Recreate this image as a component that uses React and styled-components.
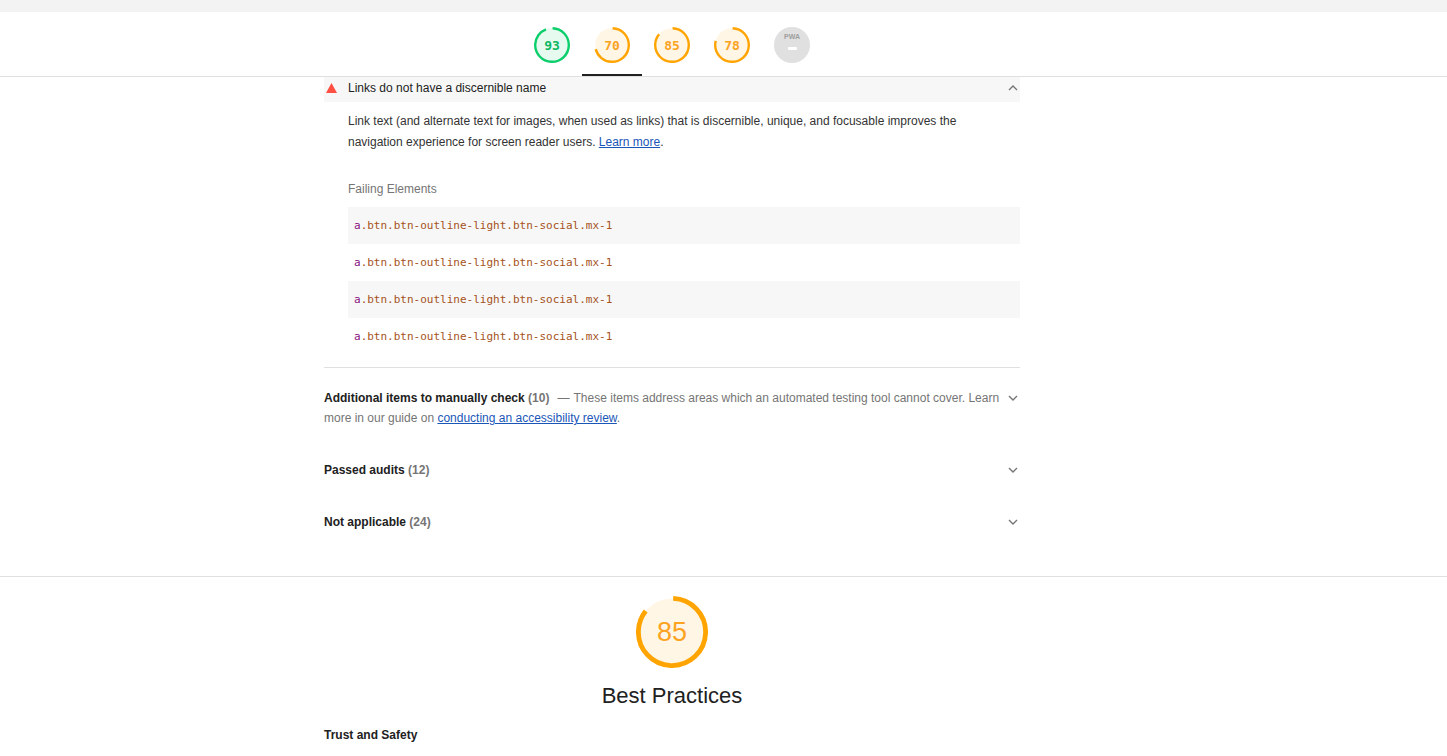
import React from "react";
import styled, { createGlobalStyle } from "styled-components";

const GlobalStyle = createGlobalStyle`
  html, body { margin: 0; padding: 0; background: #fff; }
  body { font-family: "Liberation Sans", Arial, sans-serif; color: #212121; }
  * { box-sizing: border-box; }
`;

const COLORS = {
  pass: { stroke: "#0cce6b", fill: "#e7faf0", text: "#0cb862" },
  average: { stroke: "#ffa400", fill: "#fff6e6", text: "#fca322" },
};

const TopStrip = styled.div`
  height: 12px;
  background: #f3f3f3;
`;

const StickyHeader = styled.header`
  height: 65px;
  border-bottom: 1px solid #e0e0e0;
  background: #fff;
`;

const Column = styled.div`
  width: 696px;
  margin-left: 324px;
`;

const GaugeRow = styled.div`
  display: flex;
  justify-content: center;
  height: 64px;
`;

const GaugeTab = styled.div`
  width: 60px;
  height: 64px;
  padding-top: 4px;
  display: flex;
  align-items: center;
  justify-content: center;
  border-bottom: 2px solid ${(p) => (p.$active ? "#212121" : "transparent")};
`;

const GaugeBox = styled.div`
  position: relative;
  width: ${(p) => p.$size}px;
  height: ${(p) => p.$size}px;
  display: flex;
  align-items: center;
  justify-content: center;
`;

const GaugeSvg = styled.svg`
  position: absolute;
  inset: 0;
  width: 100%;
  height: 100%;
`;

const GaugeLabel = styled.span`
  position: relative;
  font-family: ${(p) => (p.$mono ? '"DejaVu Sans Mono", monospace' : '"Liberation Sans", Arial, sans-serif')};
  font-weight: ${(p) => (p.$mono ? 700 : 400)};
  font-size: ${(p) => p.$fontSize}px;
  color: ${(p) => p.$color};
  line-height: 1;
`;

const PwaBadge = styled.div`
  width: 36px;
  height: 36px;
  border-radius: 50%;
  background: #e0e0e0;
  display: flex;
  flex-direction: column;
  align-items: center;
  padding-top: 6px;
`;

const PwaText = styled.span`
  font-family: "Liberation Sans", Arial, sans-serif;
  font-size: 7px;
  font-weight: 700;
  color: #9e9e9e;
  line-height: 8px;
`;

const PwaDash = styled.span`
  width: 9px;
  height: 3px;
  margin-top: 6px;
  background: #fff;
  border-radius: 1px;
`;

function Gauge({ score, size, kind, mono, fontSize }) {
  const c = COLORS[kind];
  const r = 56;
  const circ = 2 * Math.PI * r;
  return (
    <GaugeBox $size={size}>
      <GaugeSvg viewBox="0 0 120 120">
        <circle cx="60" cy="60" r={r} fill={c.fill} stroke="none" />
        <circle
          cx="60"
          cy="60"
          r={r}
          fill="none"
          stroke={c.stroke}
          strokeWidth="8"
          strokeDasharray={`${(score / 100) * circ} ${circ}`}
          transform="rotate(-88 60 60)"
        />
      </GaugeSvg>
      <GaugeLabel $mono={mono} $fontSize={fontSize} $color={c.text}>
        {score}
      </GaugeLabel>
    </GaugeBox>
  );
}

const AuditHeader = styled.div`
  display: flex;
  align-items: flex-start;
  height: 25px;
  padding-top: 1px;
  background: #f7f7f7;
  font-size: 12px;
  line-height: 20px;
`;

const IconSlot = styled.span`
  width: 24px;
  height: 20px;
  display: flex;
  align-items: center;
  padding-left: 2px;
`;

const AuditTitle = styled.span`
  flex: 1;
  color: #212121;
`;

const ChevronSlot = styled.span`
  width: 14px;
  display: flex;
  justify-content: center;
  align-items: center;
  flex-shrink: 0;
  height: 20px;
`;

const Description = styled.p`
  margin: 9px 0 0 24px;
  padding-right: 40px;
  font-size: 12px;
  line-height: 21px;
  color: #333;
`;

const Link = styled.a`
  color: #1a56b7;
  text-decoration: underline;
`;

const FailingLabel = styled.div`
  margin: 26px 0 0 24px;
  font-size: 12px;
  line-height: 20px;
  color: #757575;
`;

const ElementTable = styled.div`
  margin: 8px 0 0 24px;
`;

const ElementRow = styled.div`
  height: 37px;
  display: flex;
  align-items: center;
  padding-left: 6px;
  background: ${(p) => (p.$shaded ? "#f7f7f7" : "transparent")};
  font-family: "DejaVu Sans Mono", monospace;
  font-size: 11px;
`;

const Tag = styled.span`
  color: #881280;
`;

const Classes = styled.span`
  color: #a5521b;
`;

const Divider = styled.hr`
  margin: 12px 0 0 0;
  border: none;
  border-top: 1px solid #e0e0e0;
`;

const Groups = styled.div`
  padding-top: 4px;
`;

const Group = styled.div`
  display: flex;
  align-items: flex-start;
  gap: 2px;
  padding: 16px 0;
  font-size: 12px;
  line-height: 20px;
`;

const GroupText = styled.div`
  width: 680px;
  color: #757575;
`;

const GroupTitle = styled.span`
  font-weight: 700;
  color: #212121;
`;

const GroupCount = styled.span`
  font-weight: 700;
  color: #757575;
`;

const Dash = styled.span`
  margin: 0 1px 0 8px;
`;

const Section = styled.section`
  margin-top: 28px;
  border-top: 1px solid #e0e0e0;
  padding-top: 19px;
`;

const CategoryHead = styled.div`
  display: flex;
  flex-direction: column;
  align-items: center;
`;

const CategoryTitle = styled.h2`
  margin: 14px 0 0 0;
  font-size: 22px;
  line-height: 28px;
  font-weight: 400;
  color: #212121;
`;

const SubGroupTitle = styled.div`
  margin-top: 15px;
  font-size: 12px;
  line-height: 20px;
  font-weight: 700;
  color: #212121;
`;

const Chevron = ({ up }) => (
  <svg width="10" height="6" viewBox="0 0 10 6">
    <path
      d={up ? "M1 5 L5 1 L9 5" : "M1 1 L5 5 L9 1"}
      fill="none"
      stroke="#757575"
      strokeWidth="1.4"
    />
  </svg>
);

const FailIcon = () => (
  <svg width="11" height="10" viewBox="0 0 11 10">
    <polygon points="5.5,0 11,10 0,10" fill="#ff4e42" />
  </svg>
);

const selector = ".btn.btn-outline-light.btn-social.mx-1";

export default function App() {
  return (
    <>
      <GlobalStyle />
      <TopStrip />
      <StickyHeader>
        <Column>
          <GaugeRow>
            <GaugeTab>
              <Gauge score={93} size={36} kind="pass" mono fontSize={13} />
            </GaugeTab>
            <GaugeTab $active>
              <Gauge score={70} size={36} kind="average" mono fontSize={13} />
            </GaugeTab>
            <GaugeTab>
              <Gauge score={85} size={36} kind="average" mono fontSize={13} />
            </GaugeTab>
            <GaugeTab>
              <Gauge score={78} size={36} kind="average" mono fontSize={13} />
            </GaugeTab>
            <GaugeTab>
              <PwaBadge>
                <PwaText>PWA</PwaText>
                <PwaDash />
              </PwaBadge>
            </GaugeTab>
          </GaugeRow>
        </Column>
      </StickyHeader>

      <Column>
        <AuditHeader>
          <IconSlot>
            <FailIcon />
          </IconSlot>
          <AuditTitle>Links do not have a discernible name</AuditTitle>
          <ChevronSlot>
            <Chevron up />
          </ChevronSlot>
        </AuditHeader>
        <Description>
          Link text (and alternate text for images, when used as links) that is discernible, unique, and
          focusable improves the navigation experience for screen reader users. <Link href="#">Learn more</Link>.
        </Description>
        <FailingLabel>Failing Elements</FailingLabel>
        <ElementTable>
          {[0, 1, 2, 3].map((i) => (
            <ElementRow key={i} $shaded={i % 2 === 0}>
              <Tag>a</Tag>
              <Classes>{selector}</Classes>
            </ElementRow>
          ))}
        </ElementTable>
        <Divider />
        <Groups>
          <Group>
            <GroupText>
              <GroupTitle>Additional items to manually check</GroupTitle> <GroupCount>(10)</GroupCount>
              <Dash>—</Dash> These items address areas which an automated testing tool cannot cover. Learn
              more in our guide on <Link href="#">conducting an accessibility review</Link>.
            </GroupText>
            <ChevronSlot>
              <Chevron />
            </ChevronSlot>
          </Group>
          <Group>
            <GroupText>
              <GroupTitle>Passed audits</GroupTitle> <GroupCount>(12)</GroupCount>
            </GroupText>
            <ChevronSlot>
              <Chevron />
            </ChevronSlot>
          </Group>
          <Group>
            <GroupText>
              <GroupTitle>Not applicable</GroupTitle> <GroupCount>(24)</GroupCount>
            </GroupText>
            <ChevronSlot>
              <Chevron />
            </ChevronSlot>
          </Group>
        </Groups>
      </Column>

      <Section>
        <Column>
          <CategoryHead>
            <Gauge score={85} size={72} kind="average" fontSize={27} />
            <CategoryTitle>Best Practices</CategoryTitle>
          </CategoryHead>
          <SubGroupTitle>Trust and Safety</SubGroupTitle>
        </Column>
      </Section>
    </>
  );
}
